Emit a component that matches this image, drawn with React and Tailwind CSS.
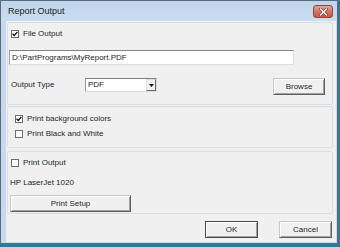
import React from "react";

const font = "font-['Liberation_Sans',Arial,sans-serif]";

function Check({ checked }) {
  return (
    <div className="w-[8px] h-[8px] border border-[#6e6e6e] bg-white flex items-center justify-center shrink-0">
      {checked && (
        <svg width="6" height="6" viewBox="0 0 6 6">
          <path d="M0.6 2.8 L2.2 4.5 L5.4 0.9" fill="none" stroke="#111" strokeWidth="1.3" />
        </svg>
      )}
    </div>
  );
}

function Btn({ w, label, def, className = "" }) {
  return (
    <div
      className={`h-[17px] ${w} ${className} flex items-center justify-center bg-[#f0f0f0] border ${
        def ? "border-[#4a4a4a]" : "border-[#c8c8c8] border-r-[#5f5f5f] border-b-[#5f5f5f]"
      } shadow-[inset_1px_1px_0_#ffffff,inset_-1px_-1px_0_#a0a0a0] text-[8px] text-[#262626]`}
    >
      {label}
    </div>
  );
}

export default function App() {
  return (
    <div className={`w-[340px] h-[247px] bg-[#2a7b99] overflow-hidden ${font}`}>
      <div className="w-[338px] h-[244px] border border-[#5b6b7c] bg-[#c6d9ee] flex flex-col">
        {/* title bar */}
        <div className="h-[20px] flex items-center bg-gradient-to-b from-[#c0d4eb] to-[#cbddf1] relative">
          <span className="ml-[7px] text-[9px] text-[#1a1a1a] leading-none">Report Output</span>
          <div className="ml-auto mr-[4px] mt-[1px] w-[20px] h-[13px] rounded-[3px] border border-[#8a4a42] bg-gradient-to-b from-[#e4a396] via-[#d27565] to-[#c5594a] flex items-center justify-center">
            <svg width="9" height="8" viewBox="0 0 9 8">
              <path d="M1.5 1 L7.5 7 M7.5 1 L1.5 7" stroke="#6a3129" strokeWidth="2.6" strokeLinecap="square" />
              <path d="M1.5 1 L7.5 7 M7.5 1 L1.5 7" stroke="#ffffff" strokeWidth="1.4" strokeLinecap="square" />
            </svg>
          </div>
        </div>
        {/* client */}
        <div className="ml-[5px] w-[330px] h-[221px] bg-[#f0f0f0] pl-[1px] pt-[1px] text-[8px] text-[#262626] leading-none">
          {/* group 1 */}
          <div className="w-[326px] h-[83px] border border-[#d5dfe5] rounded-[2px] pt-[6px]">
            <div className="h-[10px] flex items-center ml-[3px]">
              <Check checked />
              <span className="ml-[4px]">File Output</span>
            </div>
            <div className="mt-[11px] ml-[1px] w-[285px] h-[15px] bg-white border border-[#dcdcdc] border-t-[#828282] border-l-[#9a9a9a] flex items-center pl-[2px]">
              D:\PartPrograms\MyReport.PDF
            </div>
            <div className="mt-[13px] h-[15px] flex items-start">
              <span className="ml-[3px] w-[74px] mt-[3px]">Output Type</span>
              <div className="w-[72px] h-[14px] bg-white border border-[#dcdcdc] border-t-[#828282] border-l-[#9a9a9a] flex items-center">
                <span className="ml-[2px]">PDF</span>
                <div className="ml-auto w-[10px] h-[12px] bg-[#f0f0f0] border border-[#dedede] border-r-[#6a6a6a] border-b-[#6a6a6a] flex items-center justify-center">
                  <svg width="5" height="3" viewBox="0 0 5 3">
                    <path d="M0 0 H5 L2.5 3 Z" fill="#111" />
                  </svg>
                </div>
              </div>
              <Btn w="w-[52px]" label="Browse" className="ml-[116px] h-[16px]" />
            </div>
          </div>
          {/* group 2 */}
          <div className="mt-[1px] w-[326px] h-[42px] border border-[#d5dfe5] rounded-[2px] pt-[7px]">
            <div className="h-[10px] flex items-center ml-[7px]">
              <Check checked />
              <span className="ml-[4px]">Print background colors</span>
            </div>
            <div className="mt-[5px] h-[10px] flex items-center ml-[7px]">
              <Check />
              <span className="ml-[4px]">Print Black and White</span>
            </div>
          </div>
          {/* group 3 */}
          <div className="mt-[3px] w-[326px] h-[63px] border border-[#d5dfe5] rounded-[2px] pt-[6px]">
            <div className="h-[10px] flex items-center ml-[3px]">
              <Check />
              <span className="ml-[4px]">Print Output</span>
            </div>
            <div className="mt-[10px] h-[10px] flex items-center ml-[2px]">HP LaserJet 1020</div>
            <Btn w="w-[121px]" label="Print Setup" className="mt-[7px] ml-[2px]" />
          </div>
          {/* buttons */}
          <div className="mt-[7px] flex">
            <Btn w="w-[53px]" label="OK" def className="ml-[198px]" />
            <Btn w="w-[53px]" label="Cancel" className="ml-[21px]" />
          </div>
        </div>
      </div>
    </div>
  );
}
